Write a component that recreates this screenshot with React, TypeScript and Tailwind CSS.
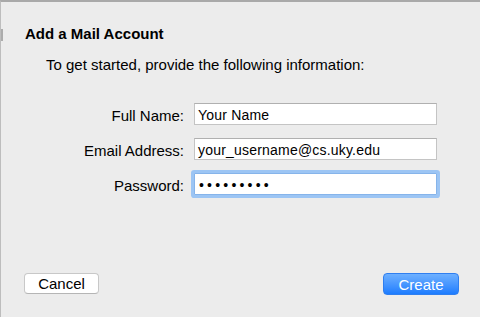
import React from "react";

export default function App() {
  const font = { fontFamily: '"Liberation Sans", Arial, Helvetica, sans-serif' };
  return (
    <div
      className="relative w-[480px] h-[317px] overflow-hidden bg-[#ececec] border-t-2 border-t-[#a9a9a9] border-l border-l-[#bdbdbd] flex flex-col text-[15px] leading-[17px] text-black"
      style={font}
    >
      <div className="absolute left-0 top-[27px] w-[2px] h-[12px] bg-[#6b6b6b] opacity-50" />
      <div className="pl-[24px] pt-[23px] font-bold">Add a Mail Account</div>
      <div className="pl-[45px] mt-[14px]">To get started, provide the following information:</div>

      <div className="mt-[30px] grid grid-cols-[183px_243px] gap-x-[10px] gap-y-[13px]">
        <div className="text-right pt-[4px]">Full Name:</div>
        <div className="h-[22px] bg-white border border-[#c4c4c4] border-t-[#b0b0b0] pl-[3px] pt-[3px] text-[14px] tracking-[0.2px]">Your Name</div>

        <div className="text-right pt-[4px]">Email Address:</div>
        <div className="h-[22px] bg-white border border-[#c4c4c4] border-t-[#b0b0b0] pl-[3px] pt-[3px] text-[14px] tracking-[0.2px]">your_username@cs.uky.edu</div>

        <div className="text-right pt-[4px]">Password:</div>
        <div className="h-[22px] bg-white border border-[#86b4ea] ring-[3px] ring-[#9cc5f4] rounded-[1px] pl-[4px] pt-[3px] text-[14px] tracking-[3.2px]">•••••••••</div>
      </div>

      <div className="mt-auto mb-[22px] flex justify-between pl-[23px] pr-[21px]">
        <div className="w-[75px] h-[21px] bg-white border border-[#c8c8c8] border-b-[#b5b5b5] rounded-[4px] flex items-center justify-center">
          Cancel
        </div>
        <div className="w-[76px] h-[22px] rounded-[4px] border border-[#2f7ff0] bg-gradient-to-b from-[#6db0ff] to-[#1b7cff] text-white flex items-center justify-center">
          Create
        </div>
      </div>
    </div>
  );
}
